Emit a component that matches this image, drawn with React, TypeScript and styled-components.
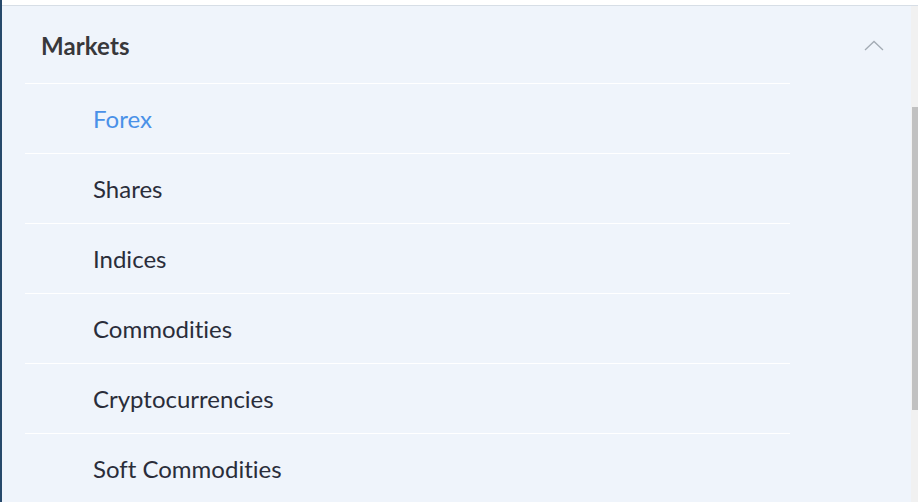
import styled, { createGlobalStyle } from "styled-components";

const GlobalStyle = createGlobalStyle`
  html, body {
    margin: 0;
    padding: 0;
    background: #ffffff;
    overflow: hidden;
  }
  body {
    font-family: Lato, "Open Sans", sans-serif;
    font-variant-ligatures: none;
  }
`;

const items = [
  { label: "Forex", active: true },
  { label: "Shares" },
  { label: "Indices" },
  { label: "Commodities" },
  { label: "Cryptocurrencies" },
  { label: "Soft Commodities" },
];

const App = () => {
  return (
    <>
      <GlobalStyle />
      <Frame>
        <Panel>
          <Content>
            <Header>
              <Title>Markets</Title>
              <Chevron viewBox="0 0 20 11" width="20" height="11">
                <path d="M1 10 L10 1.5 L19 10" fill="none" stroke="#a3abb4" strokeWidth="1.3" />
              </Chevron>
            </Header>
            <List>
              {items.map((item) => (
                <Item key={item.label}>
                  <ItemLabel $active={item.active}>{item.label}</ItemLabel>
                </Item>
              ))}
            </List>
          </Content>
          <Track>
            <Thumb />
          </Track>
        </Panel>
      </Frame>
    </>
  );
};

export default App;

const Frame = styled.div`
  height: 502px;
  border-left: 2px solid #27496b;
  padding-top: 5px;
  box-sizing: border-box;
  background: #ffffff;
`;

const Panel = styled.div`
  display: flex;
  height: 100%;
  border-top: 1px solid #d7dee6;
  background: #eff4fb;
  box-sizing: border-box;
`;

const Content = styled.div`
  flex: 1;
  min-width: 0;
`;

const Header = styled.div`
  display: flex;
  align-items: center;
  justify-content: space-between;
  height: 77px;
  padding: 2px 27px 0 39px;
  box-sizing: border-box;
`;

const Title = styled.h2`
  margin: 0;
  font-size: 24px;
  font-weight: 700;
  color: #38383b;
  letter-spacing: 0.1px;
`;

const Chevron = styled.svg`
  display: block;
`;

const List = styled.ul`
  list-style: none;
  margin: 0 0 0 23px;
  padding: 0;
  width: 765px;
`;

const Item = styled.li`
  height: 70px;
  display: flex;
  align-items: center;
  border-top: 1.5px solid #ffffff;
  box-sizing: border-box;
  padding-left: 68px;
`;

const ItemLabel = styled.span<{ $active?: boolean }>`
  font-size: 24px;
  font-weight: 400;
  color: ${(p) => (p.$active ? "#4a91e8" : "#2a2d3a")};
`;

const Track = styled.div`
  width: 7px;
  flex-shrink: 0;
  background: #f1f1f1;
  padding-top: 101px;
  box-sizing: border-box;
`;

const Thumb = styled.div`
  margin-left: 1px;
  height: 303px;
  background: #c1c1c1;
`;
